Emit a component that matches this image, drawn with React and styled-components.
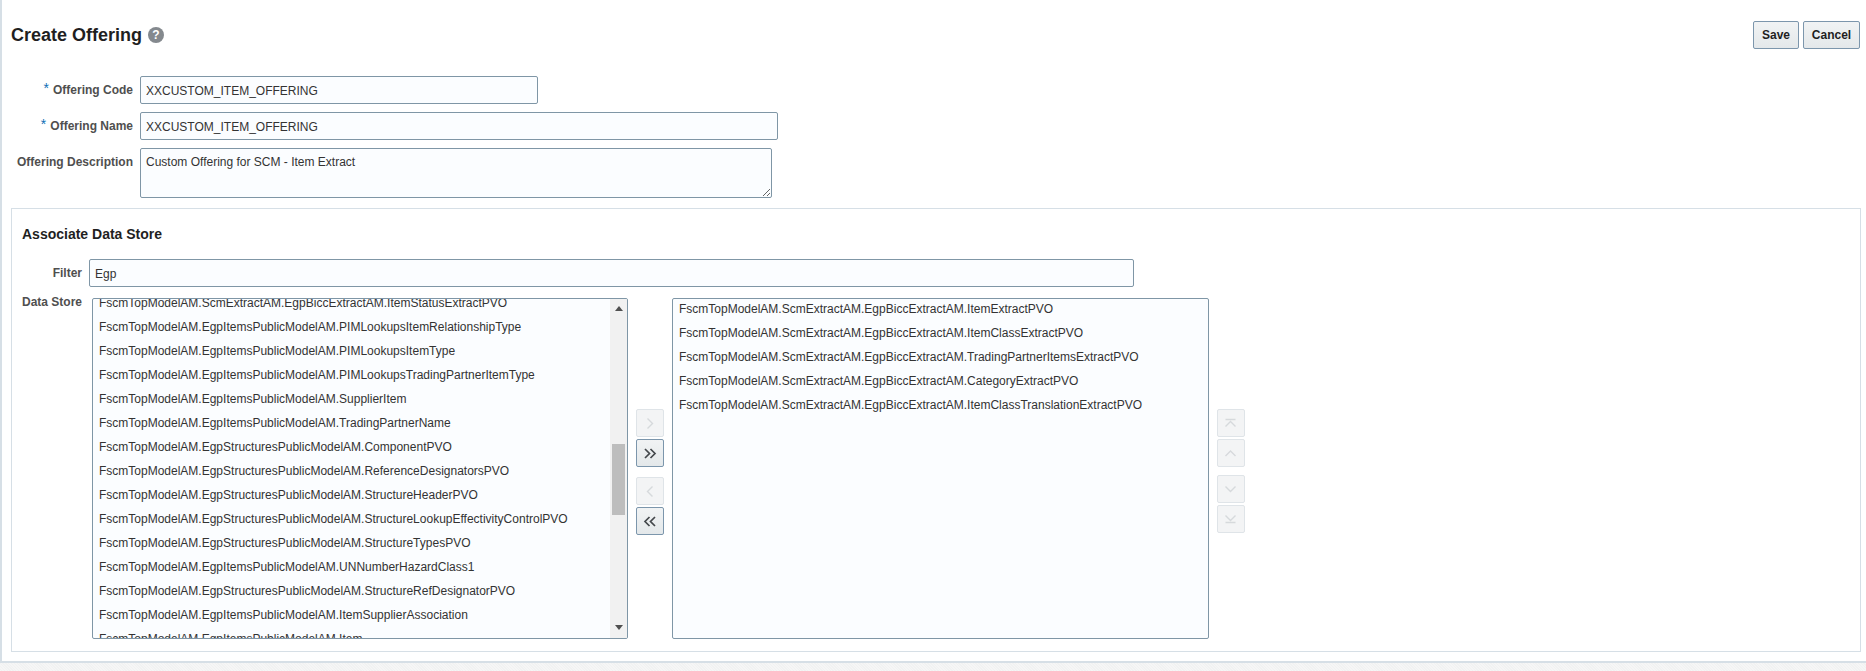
import React from 'react'
import styled, { createGlobalStyle } from 'styled-components'

const available = [
  'FscmTopModelAM.ScmExtractAM.EgpBiccExtractAM.ItemStatusExtractPVO',
  'FscmTopModelAM.EgpItemsPublicModelAM.PIMLookupsItemRelationshipType',
  'FscmTopModelAM.EgpItemsPublicModelAM.PIMLookupsItemType',
  'FscmTopModelAM.EgpItemsPublicModelAM.PIMLookupsTradingPartnerItemType',
  'FscmTopModelAM.EgpItemsPublicModelAM.SupplierItem',
  'FscmTopModelAM.EgpItemsPublicModelAM.TradingPartnerName',
  'FscmTopModelAM.EgpStructuresPublicModelAM.ComponentPVO',
  'FscmTopModelAM.EgpStructuresPublicModelAM.ReferenceDesignatorsPVO',
  'FscmTopModelAM.EgpStructuresPublicModelAM.StructureHeaderPVO',
  'FscmTopModelAM.EgpStructuresPublicModelAM.StructureLookupEffectivityControlPVO',
  'FscmTopModelAM.EgpStructuresPublicModelAM.StructureTypesPVO',
  'FscmTopModelAM.EgpItemsPublicModelAM.UNNumberHazardClass1',
  'FscmTopModelAM.EgpStructuresPublicModelAM.StructureRefDesignatorPVO',
  'FscmTopModelAM.EgpItemsPublicModelAM.ItemSupplierAssociation',
  'FscmTopModelAM.EgpItemsPublicModelAM.Item',
]

const selected = [
  'FscmTopModelAM.ScmExtractAM.EgpBiccExtractAM.ItemExtractPVO',
  'FscmTopModelAM.ScmExtractAM.EgpBiccExtractAM.ItemClassExtractPVO',
  'FscmTopModelAM.ScmExtractAM.EgpBiccExtractAM.TradingPartnerItemsExtractPVO',
  'FscmTopModelAM.ScmExtractAM.EgpBiccExtractAM.CategoryExtractPVO',
  'FscmTopModelAM.ScmExtractAM.EgpBiccExtractAM.ItemClassTranslationExtractPVO',
]

const icons = {
  right: 'M11.5 9.5l5 5-5 5',
  left: 'M16.5 9.5l-5 5 5 5',
  rightAll: 'M9 10l4.5 4.5-4.5 4.5M14.5 10l4.5 4.5-4.5 4.5',
  leftAll: 'M13.5 10L9 14.5l4.5 4.5M19 10l-4.5 4.5L19 19',
  top: 'M8.5 10.5h10M8.5 17.5l5-5 5 5',
  up: 'M8.5 17l5-5 5 5',
  down: 'M8.5 11.5l5 5 5-5',
  bottom: 'M8.5 10.5l5 5 5-5M8.5 17.5h10',
}

function App() {
  return (
    <>
      <GlobalStyle />
      <Page>
        <Header>
          <TitleGroup>
            <Title>Create Offering</Title>
            <HelpIcon>?</HelpIcon>
          </TitleGroup>
          <Actions>
            <ActionButton $width={46}>Save</ActionButton>
            <ActionButton $width={57}>Cancel</ActionButton>
          </Actions>
        </Header>

        <Form>
          <FieldLabel>
            <Star>*</Star>Offering Code
          </FieldLabel>
          <TextInput $width={398} defaultValue="XXCUSTOM_ITEM_OFFERING" readOnly />
          <FieldLabel>
            <Star>*</Star>Offering Name
          </FieldLabel>
          <TextInput $width={638} defaultValue="XXCUSTOM_ITEM_OFFERING" readOnly />
          <FieldLabel>Offering Description</FieldLabel>
          <TextArea defaultValue="Custom Offering for SCM - Item Extract" readOnly />
        </Form>

        <Panel>
          <PanelTitle>Associate Data Store</PanelTitle>
          <FilterRow>
            <PanelLabel $top={10}>Filter</PanelLabel>
            <TextInput $width={1045} defaultValue="Egp" readOnly />
          </FilterRow>
          <ShuttleRow>
            <PanelLabel $top={0}>Data Store</PanelLabel>
            <ListBox $width={536}>
              <Rows $offset={-8}>
                {available.map((name) => (
                  <Row key={name}>{name}</Row>
                ))}
              </Rows>
              <Scrollbar>
                <ArrowUp />
                <Thumb />
                <ArrowDown />
              </Scrollbar>
            </ListBox>
            <ButtonColumn>
              <IconGroup>
                <ShuttleButton icon="right" disabled />
                <ShuttleButton icon="rightAll" />
              </IconGroup>
              <IconGroup>
                <ShuttleButton icon="left" disabled />
                <ShuttleButton icon="leftAll" />
              </IconGroup>
            </ButtonColumn>
            <ListBox $width={537}>
              <Rows $offset={-2}>
                {selected.map((name) => (
                  <Row key={name}>{name}</Row>
                ))}
              </Rows>
            </ListBox>
            <ButtonColumn $tight>
              <IconGroup>
                <ShuttleButton icon="top" disabled />
                <ShuttleButton icon="up" disabled />
              </IconGroup>
              <IconGroup>
                <ShuttleButton icon="down" disabled />
                <ShuttleButton icon="bottom" disabled />
              </IconGroup>
            </ButtonColumn>
          </ShuttleRow>
        </Panel>
      </Page>
    </>
  )
}

function ShuttleButton({ icon, disabled }) {
  return (
    <IconButton disabled={disabled}>
      <svg width="28" height="28" viewBox="0 0 28 28" fill="none" stroke="currentColor" strokeWidth={disabled ? 1.4 : 1.7}>
        <path d={icons[icon]} />
      </svg>
    </IconButton>
  )
}

export default App

const GlobalStyle = createGlobalStyle`
  html, body {
    margin: 0;
    height: 671px;
    overflow: hidden;
    background: repeating-linear-gradient(45deg, #f6f6f6 0 1px, #f1f2f2 1px 2px);
    font-family: 'Liberation Sans', Arial, sans-serif;
    color: #333;
  }
`

const Page = styled.div`
  box-sizing: border-box;
  height: 663px;
  background: #fff;
  border-left: 2px solid #d6dfe6;
  border-bottom: 2px solid #d6dfe6;
  padding: 0 5px 8px 9px;
`

const Header = styled.div`
  display: flex;
  justify-content: space-between;
  height: 76px;
  padding-top: 21px;
  box-sizing: border-box;
`

const TitleGroup = styled.div`
  display: flex;
  align-items: flex-start;
  gap: 6px;
`

const Title = styled.h1`
  margin: 0;
  font-size: 18px;
  line-height: 28px;
  font-weight: bold;
  color: #1f1f1f;
`

const HelpIcon = styled.span`
  width: 16px;
  height: 16px;
  margin-top: 6px;
  border-radius: 50%;
  background: #84898e;
  color: #fff;
  font-size: 12px;
  font-weight: bold;
  line-height: 16px;
  text-align: center;
`

const Actions = styled.div`
  display: flex;
  gap: 4px;
  margin-right: 1px;
`

const ActionButton = styled.button`
  width: ${(props) => props.$width}px;
  height: 28px;
  padding: 0;
  border: 1px solid #7c96ac;
  border-radius: 2px;
  background: linear-gradient(#f1f3f4, #e4e8ea);
  color: #1f1f1f;
  font: bold 12px 'Liberation Sans', Arial, sans-serif;
`

const Form = styled.div`
  display: grid;
  grid-template-columns: 122px auto;
  justify-content: start;
  align-items: start;
  column-gap: 7px;
  row-gap: 8px;
`

const FieldLabel = styled.label`
  height: 28px;
  font-size: 12px;
  font-weight: bold;
  line-height: 28px;
  color: #4f4f4f;
  text-align: right;
  white-space: nowrap;
`

const Star = styled.span`
  margin-right: 4px;
  color: #0f6fb5;
  font-size: 14px;
  font-weight: normal;
  line-height: 0;
  vertical-align: 1px;
`

const TextInput = styled.input`
  box-sizing: border-box;
  width: ${(props) => props.$width}px;
  height: 28px;
  padding: 1px 5px 0;
  border: 1px solid #7f96a6;
  border-radius: 2px;
  background: #fbfdff;
  color: #333;
  font: 12px 'Liberation Sans', Arial, sans-serif;
  outline: none;
`

const TextArea = styled.textarea`
  box-sizing: border-box;
  display: block;
  width: 632px;
  height: 50px;
  padding: 6px 5px;
  border: 1px solid #7f96a6;
  border-radius: 2px;
  background: #fbfdff;
  color: #333;
  font: 12px 'Liberation Sans', Arial, sans-serif;
  outline: none;
  resize: both;
`

const Panel = styled.section`
  box-sizing: border-box;
  height: 444px;
  margin-top: 10px;
  padding: 0 9px 0 10px;
  border: 1px solid #d6dfe6;
`

const PanelTitle = styled.h2`
  margin: 0;
  padding-top: 16px;
  font-size: 14px;
  line-height: 18px;
  font-weight: bold;
  color: #1f1f1f;
`

const FilterRow = styled.div`
  display: flex;
  align-items: flex-start;
  margin-top: 16px;
`

const PanelLabel = styled.label`
  width: 60px;
  margin-right: 7px;
  flex: none;
  font-size: 12px;
  font-weight: bold;
  line-height: 8px;
  padding-top: ${(props) => props.$top}px;
  color: #4f4f4f;
  text-align: right;
  white-space: nowrap;
`

const ShuttleRow = styled.div`
  display: flex;
  align-items: flex-start;
  margin-top: 11px;
`

const ListBox = styled.div`
  box-sizing: border-box;
  display: flex;
  flex: none;
  width: ${(props) => props.$width}px;
  height: 341px;
  margin-left: 3px;
  overflow: hidden;
  border: 1px solid #7f96a6;
  border-radius: 2px;
  background: #fbfdff;
`

const Rows = styled.div`
  flex: 1;
  margin-top: ${(props) => props.$offset}px;
  padding-left: 6px;
`

const Row = styled.div`
  height: 24px;
  font-size: 12px;
  line-height: 24px;
  color: #333;
  white-space: nowrap;
`

const Scrollbar = styled.div`
  display: flex;
  flex-direction: column;
  align-items: center;
  flex: none;
  width: 17px;
  background: #f1f1f1;
`

const ArrowUp = styled.span`
  margin-top: 7px;
  border-left: 4px solid transparent;
  border-right: 4px solid transparent;
  border-bottom: 5px solid #505050;
`

const ArrowDown = styled.span`
  margin-top: 110px;
  border-left: 4px solid transparent;
  border-right: 4px solid transparent;
  border-top: 5px solid #505050;
`

const Thumb = styled.span`
  width: 13px;
  height: 71px;
  margin-top: 133px;
  background: #bdbdbd;
`

const ButtonColumn = styled.div`
  display: flex;
  flex-direction: column;
  gap: ${(props) => (props.$tight ? 8 : 10)}px;
  flex: none;
  margin: 111px 5px 0 8px;
`

const IconGroup = styled.div`
  display: flex;
  flex-direction: column;
  gap: 2px;
`

const IconButton = styled.button`
  width: 28px;
  height: 28px;
  padding: 0;
  border: 1px solid ${(props) => (props.disabled ? '#dfe4e8' : '#7c96ac')};
  border-radius: 2px;
  background: ${(props) => (props.disabled ? '#f3f4f5' : 'linear-gradient(#f1f3f4, #e4e8ea)')};
  color: ${(props) => (props.disabled ? '#d6d9dc' : '#44484c')};
  svg {
    display: block;
    margin: -1px;
  }
`
